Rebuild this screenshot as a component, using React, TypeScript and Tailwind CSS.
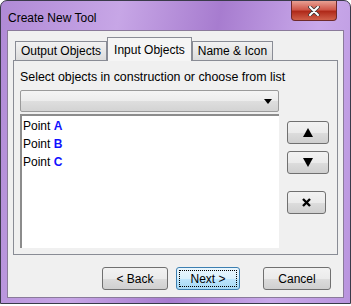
const btn =
  "flex items-center justify-center rounded-[3px] border border-[#707070] bg-[linear-gradient(#f2f2f2_0%,#ebebeb_50%,#dddddd_51%,#cfcfcf_100%)] text-[12px] text-black";

function Tab({ label, active }: { label: string; active?: boolean }) {
  if (active) {
    return (
      <div className="relative z-10 -mb-px flex h-[24px] items-center border border-b-0 border-[#898c95] bg-[#f5f5f5] px-[6px] text-[12px]">
        {label}
      </div>
    );
  }
  return (
    <div className="mt-[4px] flex h-[19px] items-center border border-b-0 border-[#898c95] bg-[linear-gradient(#f2f2f2,#dcdcdc)] px-[5px] text-[12px]">
      {label}
    </div>
  );
}

function Point({ name }: { name: string }) {
  return (
    <div className="h-[18px] leading-[18px]">
      Point <span className="font-bold text-[#1010ff]">{name}</span>
    </div>
  );
}

export default function App() {
  return (
    <div
      className="h-[306px] w-[351px] bg-white"
      style={{ fontFamily: '"Liberation Sans", Arial, sans-serif' }}
    >
      <div className="flex h-[304px] flex-col rounded-t-[7px] border border-[#3a3a4a] bg-[linear-gradient(100deg,#b08ad6_0%,#c7a6e6_30%,#a77ccf_55%,#c9a9ea_80%,#b994de_100%)] px-[6px] pb-[5px]">
        <div className="flex h-[29px] items-start">
          <div className="mt-[8px] ml-[1px] text-[12px] text-black">Create New Tool</div>
          <div className="ml-auto mr-[7px] flex h-[20px] w-[46px] items-center justify-center rounded-b-[4px] border border-t-0 border-[#6e2a2a] bg-[linear-gradient(#e8a093_0%,#d0584a_45%,#b02a1a_55%,#d0604a_100%)]">
            <svg width="12" height="10" viewBox="0 0 12 10">
              <path d="M2 1 L10 9 M10 1 L2 9" stroke="#3a3a3a" strokeWidth="3.6" strokeLinecap="round" />
              <path d="M2 1 L10 9 M10 1 L2 9" stroke="#ffffff" strokeWidth="2" strokeLinecap="round" />
            </svg>
          </div>
        </div>
        <div className="flex flex-1 flex-col border border-[#8a7a9a] bg-[#f0f0f0] px-[5px]">
          <div className="mt-[6px] flex items-end pl-[2px]">
            <Tab label="Output Objects" />
            <Tab label="Input Objects" active />
            <Tab label="Name & Icon" />
          </div>
          <div className="flex h-[195px] flex-col border border-[#898c95] bg-[#f0f0f0] px-[6px]">
            <div className="mt-[9px] h-[14px] text-[12.4px] leading-[14px]">
              Select objects in construction or choose from list
            </div>
            <div className="mt-[6px] flex">
              <div className="flex flex-col">
                <div className="flex h-[22px] w-[259px] items-center justify-end rounded-[2px] border border-[#9a9a9a] bg-[linear-gradient(#f4f4f4_0%,#ececec_50%,#dedede_51%,#d3d3d3_100%)] pr-[6px]">
                  <svg width="8" height="5" viewBox="0 0 8 5">
                    <path d="M0 0 H8 L4 5 Z" fill="#000" />
                  </svg>
                </div>
                <div className="mt-[2px] h-[134px] w-[259px] border-t-2 border-l-2 border-[#8c8c8c] bg-white pl-[1px] pt-[1px] text-[12px]">
                  <Point name="A" />
                  <Point name="B" />
                  <Point name="C" />
                </div>
              </div>
              <div className="ml-[8px] mt-[31px] flex flex-col">
                <div className={`${btn} h-[23px] w-[42px]`}>
                  <svg width="10" height="9" viewBox="0 0 10 9">
                    <path d="M5 0 L10 9 H0 Z" fill="#000" />
                  </svg>
                </div>
                <div className={`${btn} mt-[7px] h-[23px] w-[42px]`}>
                  <svg width="10" height="9" viewBox="0 0 10 9">
                    <path d="M0 0 H10 L5 9 Z" fill="#000" />
                  </svg>
                </div>
                <div className={`${btn} mt-[17px] h-[23px] w-[39px]`}>
                  <svg width="9" height="9" viewBox="0 0 9 9">
                    <path d="M1 1 L8 8 M8 1 L1 8" stroke="#000" strokeWidth="2.4" />
                  </svg>
                </div>
              </div>
            </div>
          </div>
          <div className="mt-[12px] flex pl-[89px]">
            <div className={`${btn} h-[23px] w-[66px]`}>&lt; Back</div>
            <div className="ml-[8px] flex h-[23px] w-[64px] items-center justify-center rounded-[3px] border border-[#3c7fb1] bg-[linear-gradient(#eaf6fd_0%,#d9f0fc_50%,#bee6fd_51%,#a7d9f5_100%)] p-[2px]">
              <div className="flex h-full w-full items-center justify-center border border-dotted border-black text-[12px]">
                Next &gt;
              </div>
            </div>
            <div className={`${btn} ml-[23px] h-[23px] w-[68px]`}>Cancel</div>
          </div>
        </div>
      </div>
    </div>
  );
}
